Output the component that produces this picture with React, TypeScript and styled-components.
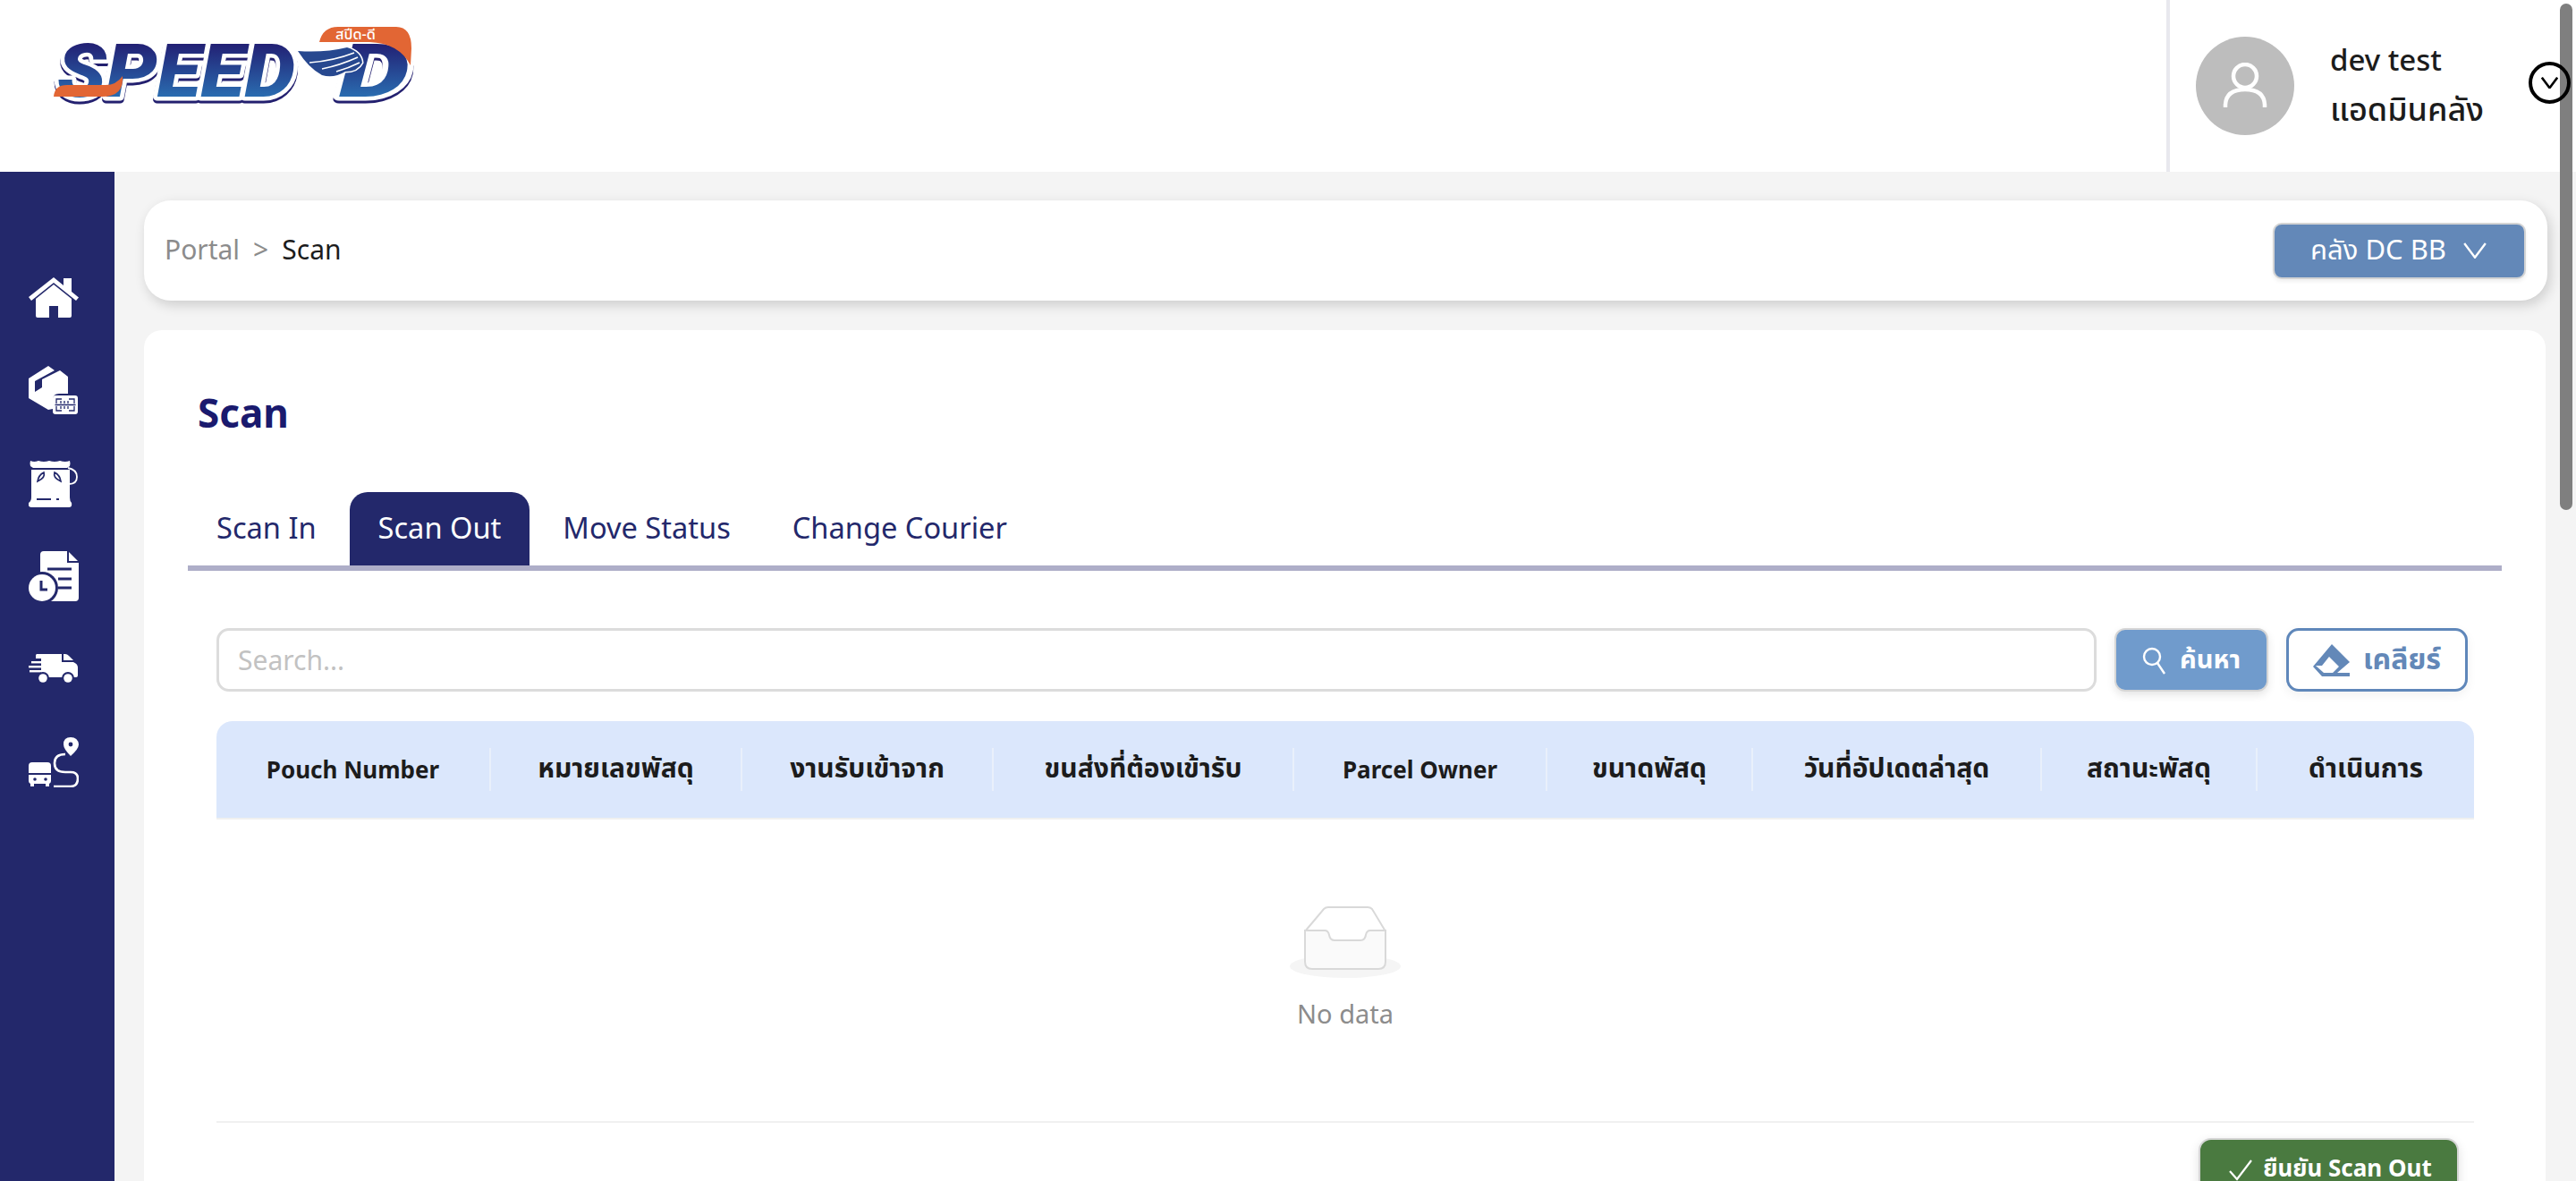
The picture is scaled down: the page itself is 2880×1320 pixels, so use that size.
import React from "react";
import styled, { createGlobalStyle } from "styled-components";

const FONT = `"Noto Sans", "Noto Sans Thai", "Open Sans", "Liberation Sans", sans-serif`;
const NAVY = "#23286b";

const Global = createGlobalStyle`
  html, body { margin: 0; padding: 0; height: 100%; overflow: hidden; background: #f4f4f4; }
  * { box-sizing: border-box; }
  body { font-family: ${FONT}; }
`;

const Page = styled.div`
  position: relative;
  height: 1320px;
  overflow: hidden;
  display: flex;
  flex-direction: column;
`;

const Header = styled.header`
  flex: 0 0 192px;
  background: #fff;
  display: flex;
  justify-content: space-between;
`;

const LogoBox = styled.div`
  padding: 26px 0 0 48px;
`;

const LogoSvg = styled.svg`
  display: block;
  overflow: visible;
`;

const LogoText = styled.g`
  filter: drop-shadow(0 3px 0 #23206f);
`;

const UserPanel = styled.div`
  width: 458px;
  border-left: 4px solid #e8e8ee;
  display: flex;
  align-items: center;
  padding-left: 29px;
  gap: 40px;
`;

const Avatar = styled.div`
  width: 110px;
  height: 110px;
  border-radius: 50%;
  background: #bdbdbd;
  display: flex;
  align-items: center;
  justify-content: center;
`;

const UserText = styled.div`
  display: flex;
  flex-direction: column;
  gap: 7px;
  margin-top: -3px;
  color: #1c1c1c;
  font-weight: 500;
`;

const UserName = styled.span`
  font-size: 33px;
  line-height: 48px;
`;

const UserRole = styled.span`
  font-size: 36px;
  line-height: 48px;
`;

const UserChevron = styled.div`
  position: absolute;
  left: 2827px;
  top: 69px;
  width: 47px;
  height: 47px;
  border: 4px solid #000;
  border-radius: 50%;
  display: flex;
  align-items: center;
  justify-content: center;
  z-index: 3;
`;

const Thumb = styled.div`
  position: absolute;
  left: 2862px;
  top: 4px;
  width: 14px;
  height: 566px;
  border-radius: 7px;
  background: #7f7f7f;
  z-index: 2;
`;

const Body = styled.div`
  flex: 1;
  display: flex;
  min-height: 0;
`;

const Sidebar = styled.nav`
  flex: 0 0 128px;
  background: ${NAVY};
  display: flex;
  flex-direction: column;
  align-items: center;
  padding-top: 88px;
`;

const NavSlot = styled.div`
  flex: 0 0 104px;
  width: 100%;
  padding-right: 8px;
  display: flex;
  align-items: center;
  justify-content: center;
`;

const NavIcon = styled.svg`
  width: 56px;
  display: block;
  fill: #fff;
`;

const Main = styled.main`
  flex: 1;
  padding: 32px 32px 0 33px;
  display: flex;
  flex-direction: column;
  gap: 33px;
  min-width: 0;
`;

const CrumbCard = styled.div`
  flex: 0 0 112px;
  background: #fff;
  border-radius: 30px;
  box-shadow: 3px 5px 14px rgba(0, 0, 0, 0.16);
  display: flex;
  align-items: center;
  justify-content: space-between;
  padding: 0 24px 0 23px;
`;

const Crumbs = styled.div`
  display: flex;
  gap: 15px;
  font-size: 30px;
  line-height: 40px;
  margin-top: -3px;
  color: #8c8c8c;
`;

const CrumbNow = styled.span`
  color: #1c1c1c;
`;

const WarehouseBtn = styled.button`
  width: 283px;
  height: 63px;
  border: 2px solid #d4d4d4;
  border-radius: 10px;
  background: #6388b8;
  color: #fff;
  font: 400 31px ${FONT};
  display: flex;
  align-items: center;
  justify-content: center;
  gap: 19px;
  padding: 0 2px 0 0;
  box-shadow: 0 3px 4px rgba(0, 0, 0, 0.06);
`;

const Card = styled.section`
  flex: 1;
  background: #fff;
  border-radius: 20px 20px 0 0;
  margin-right: 2px;
  padding: 64px 49px 0 49px;
  display: flex;
  flex-direction: column;
  min-height: 0;
`;

const Title = styled.h1`
  margin: 0 0 0 11px;
  font-size: 44px;
  line-height: 56px;
  font-weight: 700;
  color: #1a1a6e;
`;

const TabBar = styled.div`
  margin-top: 61px;
  height: 88px;
  border-bottom: 6px solid #aeaec8;
  display: flex;
  gap: 5px;
  align-items: flex-end;
`;

const Tab = styled.div<{ $active?: boolean }>`
  height: 82px;
  padding: 0 32px 3px;
  display: flex;
  align-items: center;
  font-size: 32.6px;
  color: ${(p) => (p.$active ? "#fff" : NAVY)};
  background: ${(p) => (p.$active ? NAVY : "transparent")};
  border-radius: 20px 20px 0 0;
`;

const Content = styled.div`
  margin-left: 32px;
  margin-right: 31px;
  flex: 1;
  display: flex;
  flex-direction: column;
`;

const SearchRow = styled.div`
  margin-top: 64px;
  display: flex;
  height: 71px;
  margin-right: 7px;
`;

const SearchInput = styled.div`
  flex: 1;
  border: 3px solid #dcdcdc;
  border-radius: 14px;
  display: flex;
  align-items: center;
  padding-left: 21px;
  font-size: 30px;
  color: #c2c2c2;
`;

const SearchBtn = styled.button`
  margin-left: 20px;
  width: 172px;
  border: 2px solid #d6d6d6;
  border-radius: 12px;
  background: #709bcc;
  color: #fff;
  font: 700 29px ${FONT};
  display: flex;
  align-items: center;
  justify-content: center;
  gap: 16px;
  padding: 0;
  box-shadow: 0 4px 10px rgba(0, 0, 0, 0.1);
`;

const ClearBtn = styled.button`
  margin-left: 20px;
  width: 203px;
  border: 3px solid #5f87ba;
  border-radius: 14px;
  background: #fff;
  color: #6388b8;
  font: 700 32px ${FONT};
  display: flex;
  align-items: center;
  justify-content: center;
  gap: 14px;
  padding: 0;
  box-shadow: 0 4px 12px rgba(0, 0, 0, 0.06);
`;

const TableHead = styled.div`
  margin-top: 33px;
  height: 110px;
  background: #dbe7fc;
  border-radius: 18px 18px 0 0;
  border-bottom: 2px solid #f0f0f0;
  display: flex;
  align-items: center;
`;

const HeadCell = styled.div<{ $w: number; $sep?: boolean; $latin?: boolean }>`
  flex: 0 0 ${(p) => p.$w}px;
  height: 48px;
  display: flex;
  align-items: center;
  justify-content: center;
  font-size: ${(p) => (p.$latin ? 26 : 30)}px;
  font-weight: 700;
  color: #1c1c1c;
  white-space: nowrap;
  border-right: ${(p) => (p.$sep ? "2px solid #e9f0fb" : "none")};
`;

const Empty = styled.div`
  flex: 0 0 339px;
  display: flex;
  flex-direction: column;
  align-items: center;
  padding-top: 97px;
  border-bottom: 2px solid #f0f0f0;
`;

const EmptyText = styled.div`
  margin-top: 20px;
  font-size: 29px;
  line-height: 40px;
  color: #8c8c8c;
`;

const Footer = styled.div`
  display: flex;
  justify-content: flex-end;
  padding: 17px 17px 0 0;
`;

const ConfirmBtn = styled.button`
  width: 291px;
  height: 72px;
  border: 2px solid #d6d6d6;
  border-radius: 14px;
  background: #4a7a40;
  color: #fff;
  font: 700 26px/30px ${FONT};
  display: flex;
  align-items: flex-start;
  justify-content: center;
  gap: 12px;
  padding: 16px 0 0 4px;
  box-shadow: 0 4px 12px rgba(0, 0, 0, 0.12);
`;

const CheckMark = styled.svg`
  margin-top: 6px;
`;

const columns = [
  { t: "Pouch Number", w: 307, latin: true },
  { t: "หมายเลขพัสดุ", w: 281 },
  { t: "งานรับเข้าจาก", w: 281 },
  { t: "ขนส่งที่ต้องเข้ารับ", w: 336 },
  { t: "Parcel Owner", w: 283, latin: true },
  { t: "ขนาดพัสดุ", w: 230 },
  { t: "วันที่อัปเดตล่าสุด", w: 323 },
  { t: "สถานะพัสดุ", w: 241 },
  { t: "ดำเนินการ", w: 242 },
];

const Logo = () => (
  <LogoSvg width="430" height="112" viewBox="0 0 430 112">
    <defs>
      <linearGradient id="lg" gradientUnits="userSpaceOnUse" x1="0" y1="22" x2="0" y2="82">
        <stop offset="0" stopColor="#221f73" />
        <stop offset="1" stopColor="#2a6cb0" />
      </linearGradient>
    </defs>
    <LogoText fontFamily='Roboto, "Liberation Sans", sans-serif' fontWeight="900" fontStyle="italic" stroke="#fff" strokeWidth="9" strokeLinejoin="round" fill="url(#lg)" paintOrder="stroke">
      <text x="16" y="82" fontSize="84" textLength="266" lengthAdjust="spacingAndGlyphs">SPEED</text>
      <text x="331" y="82" fontSize="84" textLength="79" lengthAdjust="spacingAndGlyphs">D</text>
    </LogoText>
    <path d="M12 82 Q13 69 27 69 H70 Q82 69 89 59 Q91 82 66 82 Z" fill="#e26634" />
    <path d="M309 21 Q313 4 330 4 H395 Q412 4 412 28 L411 47 Q398 22 365 21 Z" fill="#e26634" />
    <text x="327" y="18" fontFamily={FONT} fontSize="16" fontWeight="500" fill="#fff" textLength="45" lengthAdjust="spacingAndGlyphs">สปีด-ดี</text>
    <path d="M285 31 Q315 33 340 27 Q356 32 357 44 Q352 54 338 54 Q325 62 312 58 Q297 50 285 31 Z" fill="#27488f" stroke="#fff" strokeWidth="3" paintOrder="stroke" />
    <path d="M298 44 Q325 42 348 33 M312 51 Q332 47 352 38 M328 54 Q342 50 354 44" fill="none" stroke="#fff" strokeWidth="1.6" />
  </LogoSvg>
);

const HomeIcon = () => (
  <NavIcon viewBox="0 0 56 45" height="45">
    <path d="M0 22 L28 0 L39 9 V1 H48 V16 L56 22.5 L53 26 L28 6 L3 26 Z" />
    <path d="M8 24 L28 8 L48 24 V43 Q48 45 46 45 H33 V32 H23 V45 H10 Q8 45 8 43 Z" />
  </NavIcon>
);

const BoxIcon = () => (
  <NavIcon viewBox="0 0 56 54" height="54">
    <path d="M0 14 L22 0 L29 5 L7 17 V29 L15 24 V15 L35 5 L44 12 V31 H34 Q27 31 27 38 V48 L22 49 L0 36 Z" />
    <rect x="27" y="33" width="28" height="21" rx="3" />
    <path d="M31 42 V37 H37 M45 37 H51 V42 M31 45 V50 H37 M45 50 H51 V45 M29.5 43.5 H52.5 M36 39 V42 M40 39 V42 M44 39 V42 M36 45 V48 M40 45 V48 M44 45 V48" fill="none" stroke={NAVY} strokeWidth="1.3" />
  </NavIcon>
);

const BagIcon = () => (
  <NavIcon viewBox="0 0 56 53" height="53">
    <path d="M2 1 Q6 3 11 1 Q17 3 23 1 Q29 3 35 1 Q41 3 46 1 Q47 4 46 7 L43 9 H5 L2 7 Q1 4 2 1 Z" />
    <path d="M3 11 H46 V42 Q46 46 48 48 Q49 53 45 53 H3 Q-1 53 0 48 Q3 46 3 42 Z" />
    <path d="M10 24 Q11 17 17 14 Q19 20 10 24 Z M36 24 Q35 17 29 14 Q27 20 36 24 Z" fill="none" stroke={NAVY} strokeWidth="1.7" />
    <path d="M9 44 H25 M31 44 H34" stroke={NAVY} strokeWidth="2" fill="none" />
    <path d="M44 9 Q54 11 54 19 Q54 27 45 27" fill="none" stroke="#fff" strokeWidth="1.8" />
  </NavIcon>
);

const DocIcon = () => (
  <NavIcon viewBox="0 0 56 56" height="56">
    <path d="M17 0 H43 V13 H56 V52 Q56 56 52 56 H17 Q13 56 13 52 V4 Q13 0 17 0 Z" />
    <path d="M45 1 L55 11 H45 Z" />
    <path d="M21 20 H48 M33 31 H48 M33 41 H48" stroke={NAVY} strokeWidth="2.8" fill="none" />
    <circle cx="15" cy="41" r="18" fill={NAVY} />
    <circle cx="15" cy="41" r="15" />
    <path d="M14 33 V43 H21" fill="none" stroke={NAVY} strokeWidth="3" />
  </NavIcon>
);

const VanIcon = () => (
  <NavIcon viewBox="0 0 56 34" height="34">
    <path d="M9 0 H37 V9 H50 Q55 11 55 15 V24 Q55 26 53 26 H11 V22 H14 V5 H8 V1 Z" />
    <rect x="3" y="8" width="11" height="2.4" />
    <rect x="0" y="13" width="14" height="2.4" />
    <rect x="1" y="18" width="13" height="2.4" />
    <path d="M39 0 H41 Q43 0 45 2 L50 7 H39 Z" />
    <circle cx="16" cy="27" r="7" fill={NAVY} />
    <circle cx="16" cy="27" r="4.8" />
    <circle cx="44" cy="27" r="7" fill={NAVY} />
    <circle cx="44" cy="27" r="4.8" />
  </NavIcon>
);

const RouteIcon = () => (
  <NavIcon viewBox="0 0 56 56" height="56">
    <path d="M47 0 Q55 0 56 8 Q56 13 47 21 Q39 13 39 8 Q39 0 47 0 Z" />
    <circle cx="47" cy="8" r="2.4" fill={NAVY} />
    <path d="M41 19 Q29 19 29 29 Q29 39 41 39 H47 Q55 39 55 46 Q55 55 47 55 H28" fill="none" stroke="#fff" strokeWidth="2.6" />
    <path d="M4 28 H21 Q25 28 25 32 V40 H0 V32 Q0 28 4 28 Z" />
    <path d="M0 42 H25 V49 Q25 51 23 52 V55 H19 V52 H6 V55 H2 V52 Q0 51 0 49 Z" />
    <circle cx="7" cy="47" r="1.8" fill={NAVY} />
    <circle cx="19" cy="47" r="1.8" fill={NAVY} />
  </NavIcon>
);

const Chevron = ({ size, stroke }: { size: number; stroke: number }) => (
  <svg width={size} height={size * 0.72} viewBox="0 0 26 19" fill="none" stroke="currentColor" strokeWidth={stroke}>
    <path d="M1 1 L13 17 L25 1" />
  </svg>
);

export default function App() {
  return (
    <>
      <Global />
      <Page>
        <Header>
          <LogoBox><Logo /></LogoBox>
          <UserPanel>
            <Avatar>
              <svg width="50" height="52" viewBox="0 0 50 52" fill="none" stroke="#fff" strokeWidth="4.5">
                <circle cx="25" cy="15" r="13" />
                <path d="M3 50 V47 Q4 30 25 30 Q46 30 47 47 V50" />
              </svg>
            </Avatar>
            <UserText>
              <UserName>dev test</UserName>
              <UserRole>แอดมินคลัง</UserRole>
            </UserText>
          </UserPanel>
        </Header>
        <UserChevron><Chevron size={19} stroke={3.6} /></UserChevron>
        <Thumb />
        <Body>
          <Sidebar>
            <NavSlot><HomeIcon /></NavSlot>
            <NavSlot><BoxIcon /></NavSlot>
            <NavSlot><BagIcon /></NavSlot>
            <NavSlot><DocIcon /></NavSlot>
            <NavSlot><VanIcon /></NavSlot>
            <NavSlot><RouteIcon /></NavSlot>
          </Sidebar>
          <Main>
            <CrumbCard>
              <Crumbs>
                <span>Portal</span><span>&gt;</span><CrumbNow>Scan</CrumbNow>
              </Crumbs>
              <WarehouseBtn>
                คลัง DC BB <Chevron size={26} stroke={2.4} />
              </WarehouseBtn>
            </CrumbCard>
            <Card>
              <Title>Scan</Title>
              <TabBar>
                <Tab>Scan In</Tab>
                <Tab $active>Scan Out</Tab>
                <Tab>Move Status</Tab>
                <Tab>Change Courier</Tab>
              </TabBar>
              <Content>
                <SearchRow>
                  <SearchInput>Search...</SearchInput>
                  <SearchBtn>
                    <svg width="26" height="32" viewBox="0 0 26 32" fill="none" stroke="#fff" strokeWidth="2.4">
                      <circle cx="11" cy="12" r="9" /><path d="M17 19 L25 31" />
                    </svg>
                    ค้นหา
                  </SearchBtn>
                  <ClearBtn>
                    <svg width="42" height="36" viewBox="0 0 42 36" fill="#6388b8">
                      <path d="M21 0 L41 20 L27 32 H41 V36 H10 L0 25 Z M10 24 L3 24 L12 32 H22 L29 25 L18 14 Z" fillRule="evenodd" />
                    </svg>
                    เคลียร์
                  </ClearBtn>
                </SearchRow>
                <TableHead>
                  {columns.map((c, i) => (
                    <HeadCell key={c.t} $w={c.w} $latin={c.latin} $sep={i < columns.length - 1}>{c.t}</HeadCell>
                  ))}
                </TableHead>
                <Empty>
                  <svg width="126" height="80" viewBox="0 0 126 80">
                    <ellipse cx="63" cy="67" rx="62" ry="13" fill="#f5f5f5" />
                    <path d="M18 28 L39 3 Q41 1 44 1 H88 Q91 1 93 3 L108 28" fill="#fff" stroke="#d9d9d9" strokeWidth="2" />
                    <path d="M18 27 H40 Q44 27 45 32 Q46 38 51 38 H80 Q85 38 86 32 Q87 27 91 27 H108 V62 Q108 70 100 70 H26 Q18 70 18 62 Z" fill="#fafafa" stroke="#d9d9d9" strokeWidth="2" />
                  </svg>
                  <EmptyText>No data</EmptyText>
                </Empty>
                <Footer>
                  <ConfirmBtn>
                    <CheckMark width="26" height="24" viewBox="0 0 26 24" fill="none" stroke="#fff" strokeWidth="2.2">
                      <path d="M1 13 L9 22 L25 1" />
                    </CheckMark>
                    ยืนยัน Scan Out
                  </ConfirmBtn>
                </Footer>
              </Content>
            </Card>
          </Main>
        </Body>
      </Page>
    </>
  );
}
